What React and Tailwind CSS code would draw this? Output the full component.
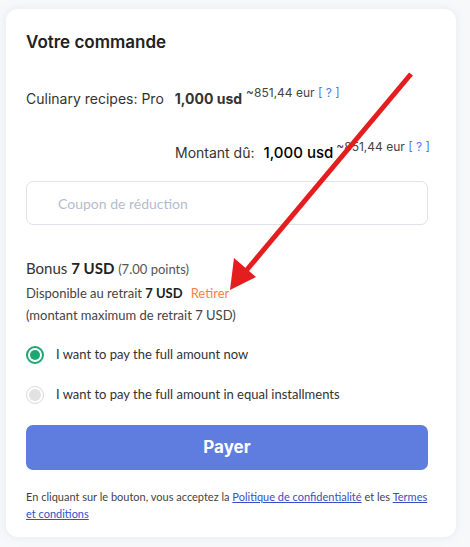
import React from "react";

export default function App() {
  return (
    <div className="relative w-[470px] h-[547px] bg-[#f7f8fa] pt-[9px] pl-[6px]">
      <div className="w-[450px] h-[528px] bg-white rounded-[12px] shadow-[0_0_8px_rgba(200,205,215,0.35)] px-[20px] pt-[22px]">
        <h2 className="font-['Inter',sans-serif] font-semibold text-[17px] leading-[22px] text-[#222]">Votre commande</h2>

        <div className="mt-[33px] flex items-start whitespace-nowrap font-['Inter',sans-serif] text-[#333]">
          <span className="text-[14px] leading-[20px] mt-[3px]">Culinary recipes: Pro</span>
          <span className="ml-[11px] text-[14px] leading-[20px] mt-[3px] font-bold text-[#333]">1,000 usd</span>
          <span className="ml-[4px] text-[12px] leading-[14px] text-[#444]">~851,44 eur <span className="text-[#4a7cf0]">[ ? ]</span></span>
        </div>

        <div className="mt-[31px] flex items-start whitespace-nowrap font-['Inter',sans-serif] pl-[149px]">
          <span className="text-[14px] leading-[20px] mt-[3px] text-[#333]">Montant dû:</span>
          <span className="ml-[9px] text-[15px] leading-[20px] mt-[3px] font-medium text-black">1,000 usd</span>
          <span className="ml-[3px] text-[12px] leading-[14px] text-[#444]">~851,44 eur <span className="text-[#4a7cf0]">[ ? ]</span></span>
        </div>

        <div className="mt-[18px] h-[44px] w-[402px] rounded-[7px] border border-[#e2e2ea] flex items-center pl-[31px]">
          <span className="font-['Lato',sans-serif] text-[14px] text-[#b6bccd]">Coupon de réduction</span>
        </div>

        <div className="mt-[33px] font-['Lato',sans-serif] text-[15px] leading-[20px] text-[#333]">
          Bonus <span className="font-bold text-[#222]">7 USD</span> <span className="text-[13px] text-[#555]">(7.00 points)</span>
        </div>
        <div className="mt-[5px] font-['Lato',sans-serif] text-[13px] leading-[18px] text-[#444]">
          Disponible au retrait <span className="font-bold text-[#222]">7 USD</span>
          <span className="ml-[8px] text-[#f5824f]">Retirer</span>
        </div>
        <div className="mt-[4px] font-['Lato',sans-serif] text-[13px] leading-[18px] text-[#444]">
          (montant maximum de retrait 7 USD)
        </div>

        <div className="mt-[21px] flex items-center h-[20px]">
          <span className="w-[18px] h-[18px] rounded-full border-2 border-[#1ba672] flex items-center justify-center">
            <span className="w-[10px] h-[10px] rounded-full bg-[#1ba672]"></span>
          </span>
          <span className="ml-[12px] font-['Lato',sans-serif] text-[13px] text-[#333]">I want to pay the full amount now</span>
        </div>
        <div className="mt-[20px] flex items-center h-[20px]">
          <span className="w-[18px] h-[18px] rounded-full border border-[#dadada] flex items-center justify-center">
            <span className="w-[12px] h-[12px] rounded-full bg-[#e2e2e2]"></span>
          </span>
          <span className="ml-[12px] font-['Lato',sans-serif] text-[13px] text-[#333]">I want to pay the full amount in equal installments</span>
        </div>

        <button className="mt-[20px] w-[402px] h-[45px] rounded-[7px] bg-[#5f7ddf] text-white font-['Inter',sans-serif] font-bold text-[17px]">
          Payer
        </button>

        <p className="mt-[18px] font-['Lato',sans-serif] text-[11px] leading-[17px] text-[#444]">
          En cliquant sur le bouton, vous acceptez la{" "}
          <a className="text-[#3b4cc8] underline">Politique de confidentialité</a> et les{" "}
          <a className="text-[#3b4cc8] underline">Termes et conditions</a>
        </p>
      </div>

      <svg className="absolute left-0 top-0 pointer-events-none" width="470" height="547">
        <line x1="411" y1="74" x2="245" y2="272" stroke="#e41e1e" strokeWidth="5" />
        <polygon points="230,290 234,258 256,277" fill="#e41e1e" />
      </svg>
    </div>
  );
}
